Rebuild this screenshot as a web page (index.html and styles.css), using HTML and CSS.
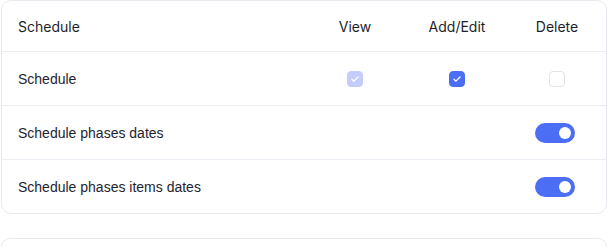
FILE: index.html
```html
<!DOCTYPE html>
<html lang="en">
<head>
  <meta charset="UTF-8">
  <title>Permissions</title>
  <link rel="stylesheet" href="styles.css">
</head>
<body>

<div class="card">
  <div class="row head">
    <div class="label">Schedule</div>
    <div class="col">View</div>
    <div class="col">Add/Edit</div>
    <div class="col">Delete</div>
  </div>

  <div class="row">
    <div class="label">Schedule</div>
    <div class="col"><span class="check disabled"><svg viewBox="0 0 16 16"><path d="M4.5 8.3l2.3 2.2 4.7-4.8"/></svg></span></div>
    <div class="col"><span class="check on"><svg viewBox="0 0 16 16"><path d="M4.5 8.3l2.3 2.2 4.7-4.8"/></svg></span></div>
    <div class="col"><span class="check"></span></div>
  </div>

  <div class="row">
    <div class="label">Schedule phases dates</div>
    <div class="col"></div>
    <div class="col"></div>
    <div class="col"><span class="toggle"><span class="knob"></span></span></div>
  </div>

  <div class="row">
    <div class="label">Schedule phases items dates</div>
    <div class="col"></div>
    <div class="col"></div>
    <div class="col"><span class="toggle"><span class="knob"></span></span></div>
  </div>
</div>

<div class="card next"></div>

</body>
</html>
```

FILE: styles.css
```css
body {
  margin: 0;
  padding: 0 8px 0 1px;
  font-family: "Liberation Sans", Arial, sans-serif;
  font-size: 14px;
  color: #1f2330;
  background: #fff;
}

.card {
  width: 604px;
  border: 1px solid #e9eaf1;
  border-radius: 10px;
  background: #fff;
}

.card.next {
  margin-top: 24px;
  height: 8px;
  border-bottom: none;
  border-radius: 10px 10px 0 0;
}

.row {
  display: grid;
  grid-template-columns: 1fr 102px 102px 98px;
  align-items: center;
  height: 53px;
  border-top: 1px solid #eceef3;
}

.row.head {
  height: 50px;
  border-top: none;
}

.head .label,
.head .col {
  font-family: Inter, "Noto Sans", sans-serif;
  font-weight: 400;
  color: #1c1f2a;
}

.label {
  padding-left: 16px;
}

.col {
  display: flex;
  justify-content: center;
  align-items: center;
}

.check {
  width: 14px;
  height: 14px;
  border: 1px solid #e2e4ec;
  border-radius: 4px;
  display: flex;
  align-items: center;
  justify-content: center;
}

.check svg {
  width: 14px;
  height: 14px;
  fill: none;
  stroke: #fff;
  stroke-width: 1.4;
  stroke-linecap: round;
  stroke-linejoin: round;
}

.check.on {
  background: #4c6ef5;
  border-color: #4c6ef5;
}

.check.disabled {
  background: #c3ccfc;
  border-color: #c3ccfc;
}

.toggle {
  width: 40px;
  height: 20px;
  margin-right: 4px;
  border-radius: 10px;
  background: #4c6ef5;
  display: flex;
  align-items: center;
  justify-content: flex-end;
  padding-right: 4px;
  box-sizing: border-box;
}

.knob {
  width: 12px;
  height: 12px;
  border-radius: 50%;
  background: #fff;
}
```
